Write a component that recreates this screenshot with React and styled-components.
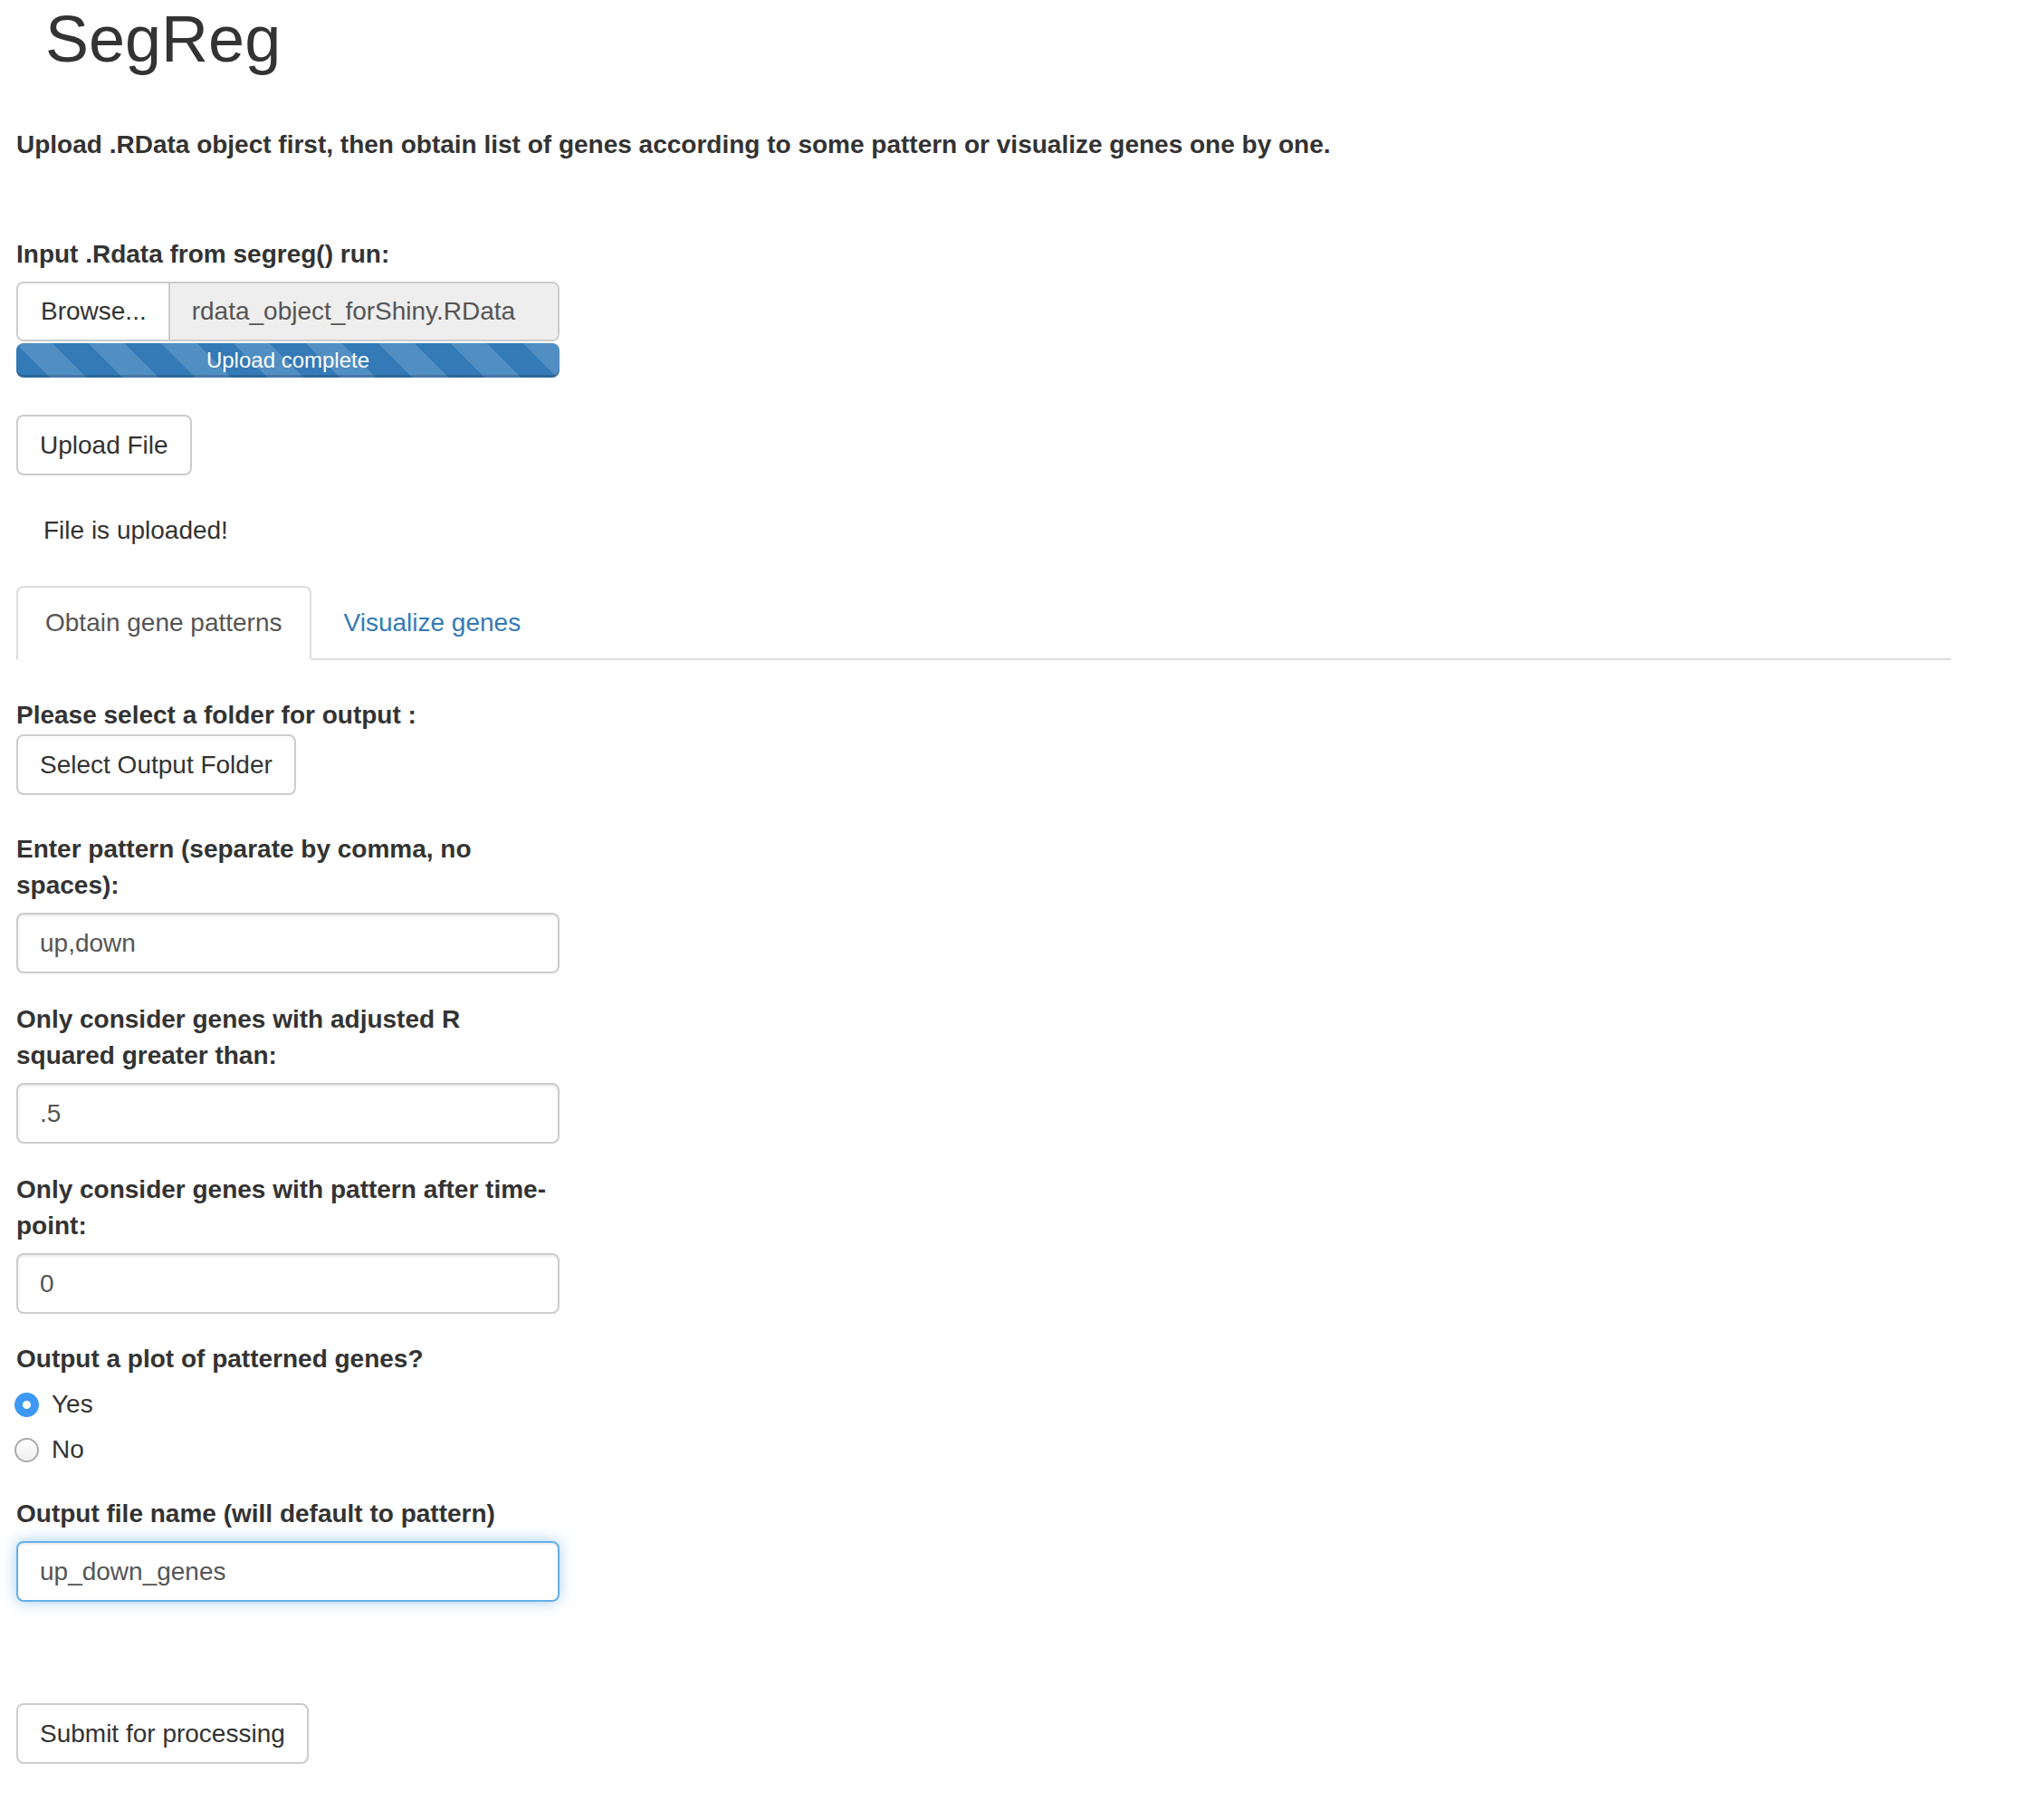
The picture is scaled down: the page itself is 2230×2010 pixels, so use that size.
import React from "react";
import styled, { createGlobalStyle } from "styled-components";

const GlobalStyle = createGlobalStyle`
  body {
    margin: 0;
    background: #fff;
    color: #333;
    font-family: "Liberation Sans", Arial, Helvetica, sans-serif;
    font-size: 28px;
    line-height: 40px;
  }
  * {
    box-sizing: border-box;
  }
`;

const Page = styled.div`
  width: 2155px;
  padding: 0 0 60px 18px;
`;

const Title = styled.h1`
  margin: 4px 0 0 32px;
  font-size: 72px;
  font-weight: 500;
  line-height: 79px;
  color: #333;
`;

const Intro = styled.p`
  margin: 57px 0 0;
  font-weight: bold;
`;

const FormGroup = styled.div`
  width: 600px;
  margin-top: ${(props) => props.$top || 30}px;
`;

const Label = styled.label`
  display: block;
  margin-bottom: ${(props) => props.$gap ?? 10}px;
  padding-top: 1px;
  font-weight: bold;
`;

const FileRow = styled.div`
  display: flex;
  height: 66px;
  border: 2px solid #ccc;
  border-radius: 8px;
  overflow: hidden;
`;

const Browse = styled.span`
  display: flex;
  align-items: center;
  padding: 0 24px 0 25px;
  border-right: 2px solid #ccc;
  background: #fff;
`;

const FileName = styled.span`
  flex: 1;
  display: flex;
  align-items: center;
  padding: 0 24px;
  background: #eee;
  color: #555;
`;

const Progress = styled.div`
  margin-top: 2px;
  height: 38px;
  border-radius: 8px;
  overflow: hidden;
  background-color: #337ab7;
  background-image: linear-gradient(
    45deg,
    rgba(255, 255, 255, 0.15) 25%,
    transparent 25%,
    transparent 50%,
    rgba(255, 255, 255, 0.15) 50%,
    rgba(255, 255, 255, 0.15) 75%,
    transparent 75%,
    transparent
  );
  background-size: 80px 80px;
  box-shadow: inset 0 -3px 0 rgba(0, 0, 0, 0.15);
  color: #fff;
  font-size: 24px;
  line-height: 38px;
  text-align: center;
`;

const Button = styled.button`
  display: block;
  height: 67px;
  margin-top: ${(props) => props.$top || 0}px;
  padding: 0 24px;
  border: 2px solid #ccc;
  border-radius: 8px;
  background: #fff;
  color: #333;
  font-family: inherit;
  font-size: 28px;
  line-height: 40px;
`;

const Status = styled.div`
  margin: 41px 0 0 30px;
`;

const TabList = styled.div`
  display: flex;
  margin-top: 41px;
  border-bottom: 2px solid #ddd;
`;

const Tab = styled.div`
  height: 82px;
  margin: 0 4px -2px 0;
  padding: 0 30px;
  display: flex;
  align-items: center;
  border: 2px solid ${(props) => (props.$active ? "#ddd" : "transparent")};
  border-bottom-color: ${(props) => (props.$active ? "#fff" : "transparent")};
  border-radius: 8px 8px 0 0;
  background: ${(props) => (props.$active ? "#fff" : "transparent")};
  color: ${(props) => (props.$active ? "#555" : "#337ab7")};
`;

const TextInput = styled.input`
  display: block;
  width: 600px;
  height: 67px;
  padding: 0 24px;
  border: 2px solid ${(props) => (props.$focused ? "#66afe9" : "#ccc")};
  border-radius: 8px;
  background: #fff;
  color: #555;
  font-family: inherit;
  font-size: 28px;
  outline: none;
  box-shadow: ${(props) =>
    props.$focused
      ? "inset 0 2px 2px rgba(0,0,0,.075), 0 0 16px rgba(102,175,233,.6)"
      : "inset 0 2px 2px rgba(0,0,0,.075)"};
`;

const RadioList = styled.div`
  display: flex;
  flex-direction: column;
  gap: 10px;
  margin-top: 1px;
`;

const RadioRow = styled.label`
  display: flex;
  align-items: center;
  gap: 14px;
  height: 40px;
  margin-left: -2px;
`;

const RadioDot = styled.span`
  width: 27px;
  height: 27px;
  border-radius: 50%;
  display: flex;
  align-items: center;
  justify-content: center;
  background: ${(props) => (props.$checked ? "#3d99f5" : "linear-gradient(#fff, #efefef)")};
  border: ${(props) => (props.$checked ? "none" : "2px solid #aaa")};

  &::after {
    content: "";
    display: ${(props) => (props.$checked ? "block" : "none")};
    width: 9px;
    height: 9px;
    border-radius: 50%;
    background: #fff;
  }
`;

const Field = ({ label, value, focused }) => (
  <FormGroup>
    <Label>{label}</Label>
    <TextInput defaultValue={value} $focused={focused} />
  </FormGroup>
);

export default function App() {
  return (
    <Page>
      <GlobalStyle />
      <Title>SegReg</Title>
      <Intro>
        Upload .RData object first, then obtain list of genes according to some pattern or
        visualize genes one by one.
      </Intro>

      <FormGroup $top={80}>
        <Label>Input .Rdata from segreg() run:</Label>
        <FileRow>
          <Browse>Browse...</Browse>
          <FileName>rdata_object_forShiny.RData</FileName>
        </FileRow>
        <Progress>Upload complete</Progress>
      </FormGroup>

      <Button $top={41}>Upload File</Button>
      <Status>File is uploaded!</Status>

      <TabList>
        <Tab $active>Obtain gene patterns</Tab>
        <Tab>Visualize genes</Tab>
      </TabList>

      <FormGroup $top={40}>
        <Label $gap={1}>Please select a folder for output :</Label>
        <Button>Select Output Folder</Button>
      </FormGroup>

      <FormGroup $top={39}>
        <Label>Enter pattern (separate by comma, no spaces):</Label>
        <TextInput defaultValue="up,down" />
      </FormGroup>
      <Field label="Only consider genes with adjusted R squared greater than:" value=".5" />
      <Field label="Only consider genes with pattern after time-point:" value="0" />

      <FormGroup $top={29}>
        <Label>Output a plot of patterned genes?</Label>
        <RadioList>
          <RadioRow>
            <RadioDot $checked />
            Yes
          </RadioRow>
          <RadioRow>
            <RadioDot />
            No
          </RadioRow>
        </RadioList>
      </FormGroup>

      <Field label="Output file name (will default to pattern)" value="up_down_genes" focused />

      <Button $top={112}>Submit for processing</Button>
    </Page>
  );
}
